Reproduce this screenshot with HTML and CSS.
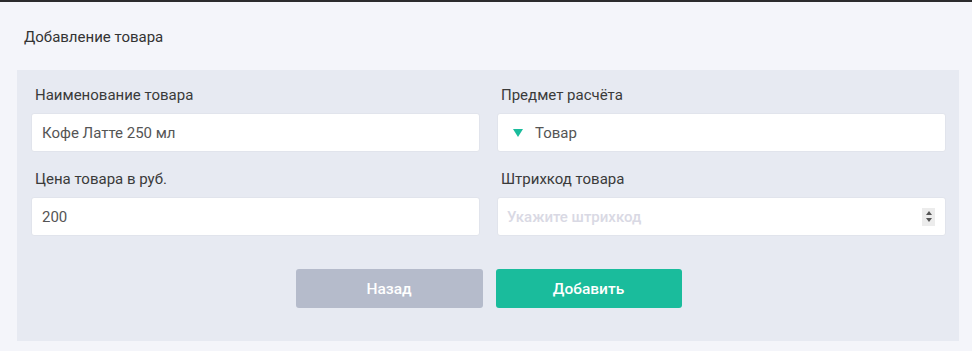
FILE: index.html
```html
<!DOCTYPE html>
<html lang="ru">
<head>
  <meta charset="UTF-8">
  <title>Добавление товара</title>
  <link rel="stylesheet" href="styles.css">
</head>
<body>
  <div class="page">
    <h1 class="page-title">Добавление товара</h1>

    <div class="form-panel">
      <div class="form-grid">
        <div class="field">
          <label class="field-label">Наименование товара</label>
          <div class="field-box">Кофе Латте 250 мл</div>
        </div>
        <div class="field">
          <label class="field-label">Предмет расчёта</label>
          <div class="field-box select-box">
            <span class="select-arrow"></span>
            <span>Товар</span>
          </div>
        </div>
        <div class="field">
          <label class="field-label">Цена товара в руб.</label>
          <div class="field-box">200</div>
        </div>
        <div class="field">
          <label class="field-label">Штрихкод товара</label>
          <div class="field-box number-box">
            <span class="placeholder">Укажите штрихкод</span>
            <span class="spinner">
              <span class="spin-up"></span>
              <span class="spin-down"></span>
            </span>
          </div>
        </div>
      </div>

      <div class="form-actions">
        <button class="btn btn-back">Назад</button>
        <button class="btn btn-add">Добавить</button>
      </div>
    </div>
  </div>
</body>
</html>
```

FILE: styles.css
```css
/* Page base */
body {
  margin: 0;
  background: #f4f5fa;
  font-family: Roboto, "Liberation Sans", sans-serif;
  color: #333;
  border-top: 2px solid #2b2b2d;
}

.page {
  padding: 0 13px 0 17px;
}

.page-title {
  margin: 0;
  padding: 25px 0 0 7px;
  height: 43px;
  font-size: 15px;
  font-weight: 400;
  line-height: 20px;
  color: #333;
}

/* Grey form panel */
.form-panel {
  background: #e7eaf2;
  padding: 15px 13px 33px 14px;
}

.form-grid {
  display: grid;
  grid-template-columns: 1fr 1fr;
  column-gap: 17px;
  row-gap: 17px;
}

.field-label {
  display: block;
  padding-left: 4px;
  font-size: 15px;
  line-height: 20px;
  color: #3a3a3a;
  margin-bottom: 8px;
}

.field-box {
  display: flex;
  align-items: center;
  height: 39px;
  box-sizing: border-box;
  padding: 0 10px;
  background: #fff;
  border: 1px solid #e1e4ec;
  border-radius: 3px;
  font-size: 15px;
  color: #555;
}

/* Select with teal triangle */
.select-box {
  padding-left: 15px;
}

.select-arrow {
  width: 0;
  height: 0;
  border-left: 5px solid transparent;
  border-right: 5px solid transparent;
  border-top: 8px solid #1abc9c;
  margin-right: 12px;
}

/* Number field with spinner */
.number-box {
  justify-content: space-between;
  padding-left: 9px;
  padding-right: 10px;
}

.placeholder {
  color: #d9d9e4;
  font-weight: 500;
}

.spinner {
  display: flex;
  flex-direction: column;
  align-items: center;
  justify-content: center;
  gap: 3px;
  width: 13px;
  height: 18px;
  background: #ececec;
}

.spin-up,
.spin-down {
  width: 0;
  height: 0;
  border-left: 3px solid transparent;
  border-right: 3px solid transparent;
}

.spin-up {
  border-bottom: 4px solid #555;
}

.spin-down {
  border-top: 4px solid #555;
}

/* Buttons */
.form-actions {
  display: flex;
  justify-content: center;
  gap: 13px;
  margin-top: 33px;
}

.btn {
  width: 187px;
  height: 39px;
  border: none;
  border-radius: 3px;
  font-family: Roboto, "Liberation Sans", sans-serif;
  font-size: 15.5px;
  font-weight: 500;
  color: #fff;
  cursor: pointer;
}

.btn-back {
  background: #b5bbcb;
}

.btn-add {
  width: 186px;
  background: #1abc9c;
}
```
